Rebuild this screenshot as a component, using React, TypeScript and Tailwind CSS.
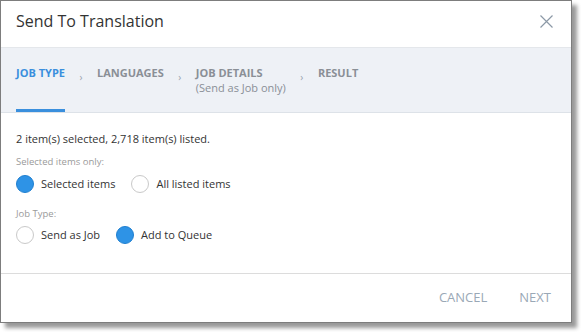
import React from "react";

function Radio({ checked, label }: { checked: boolean; label: string }) {
  return (
    <label className="flex items-center gap-[7px]">
      <span
        className={
          checked
            ? "w-[18px] h-[18px] rounded-full bg-[#2e93e6] border border-[#1f7fd0]"
            : "w-[18px] h-[18px] rounded-full bg-white border border-[#c9c9c9]"
        }
      />
      <span className="text-[11px] text-[#333]">{label}</span>
    </label>
  );
}

function Chevron() {
  return <span className="mt-[24px] text-[10px] leading-none text-[#9aa3ad]">›</span>;
}

export default function App() {
  return (
    <div className="w-[581px] h-[332px] bg-white font-['Open_Sans',sans-serif]">
      <div className="w-[572px] h-[323px] bg-white border border-[#7d7d7d] shadow-[5px_5px_4px_rgba(0,0,0,0.4)] flex flex-col">
        {/* header */}
        <div className="h-[47px] flex items-start justify-between pl-[15px] pr-[18px] pt-[9px] border-b border-[#e4e7eb]">
          <div className="text-[16px] text-[#333] leading-[22px]">Send To Translation</div>
          <svg width="13" height="13" viewBox="0 0 13 13" className="mt-[5px]">
            <path d="M0.5 0.5 L12.5 12.5 M12.5 0.5 L0.5 12.5" stroke="#8c99a6" strokeWidth="1.2" fill="none" />
          </svg>
        </div>

        {/* steps */}
        <div className="h-[65px] bg-[#eef1f6] border-b border-[#dde2e8] flex pl-[15px] gap-[14.5px]">
          <div className="flex flex-col justify-between pt-[18px]">
            <div className="text-[11px] font-bold text-[#3a8fdd] leading-[14px]">JOB TYPE</div>
            <div className="h-[3px] bg-[#3a8fdd]" />
          </div>
          <Chevron />
          <div className="pt-[18px] text-[11px] font-bold text-[#8a8f96] leading-[14px]">LANGUAGES</div>
          <Chevron />
          <div className="pt-[18px]">
            <div className="text-[11px] font-bold text-[#8a8f96] leading-[14px]">JOB DETAILS</div>
            <div className="text-[11px] text-[#8a8f96] leading-[16px]">(Send as Job only)</div>
          </div>
          <Chevron />
          <div className="pt-[18px] text-[11px] font-bold text-[#8a8f96] leading-[14px]">RESULT</div>
        </div>

        {/* body */}
        <div className="flex-1 border-b border-[#dcdcdc] pl-[15px] pt-[18px]">
          <div className="text-[11px] text-[#333] leading-[16px]">
            2 item(s) selected, 2,718 item(s) listed.
          </div>
          <div className="mt-[8px] text-[9.5px] text-[#9a9a9a] leading-[14px]">Selected items only:</div>
          <div className="mt-[6px] flex gap-[16px]">
            <Radio checked label="Selected items" />
            <Radio checked={false} label="All listed items" />
          </div>
          <div className="mt-[14px] text-[9.5px] text-[#9a9a9a] leading-[14px]">Job Type:</div>
          <div className="mt-[5px] flex gap-[16px]">
            <Radio checked={false} label="Send as Job" />
            <Radio checked label="Add to Queue" />
          </div>
        </div>

        {/* footer */}
        <div className="h-[48px] flex items-center justify-end gap-[32px] pr-[20px]">
          <button className="text-[13px] text-[#9aa8b6]">CANCEL</button>
          <button className="text-[13px] text-[#9aa8b6]">NEXT</button>
        </div>
      </div>
    </div>
  );
}
